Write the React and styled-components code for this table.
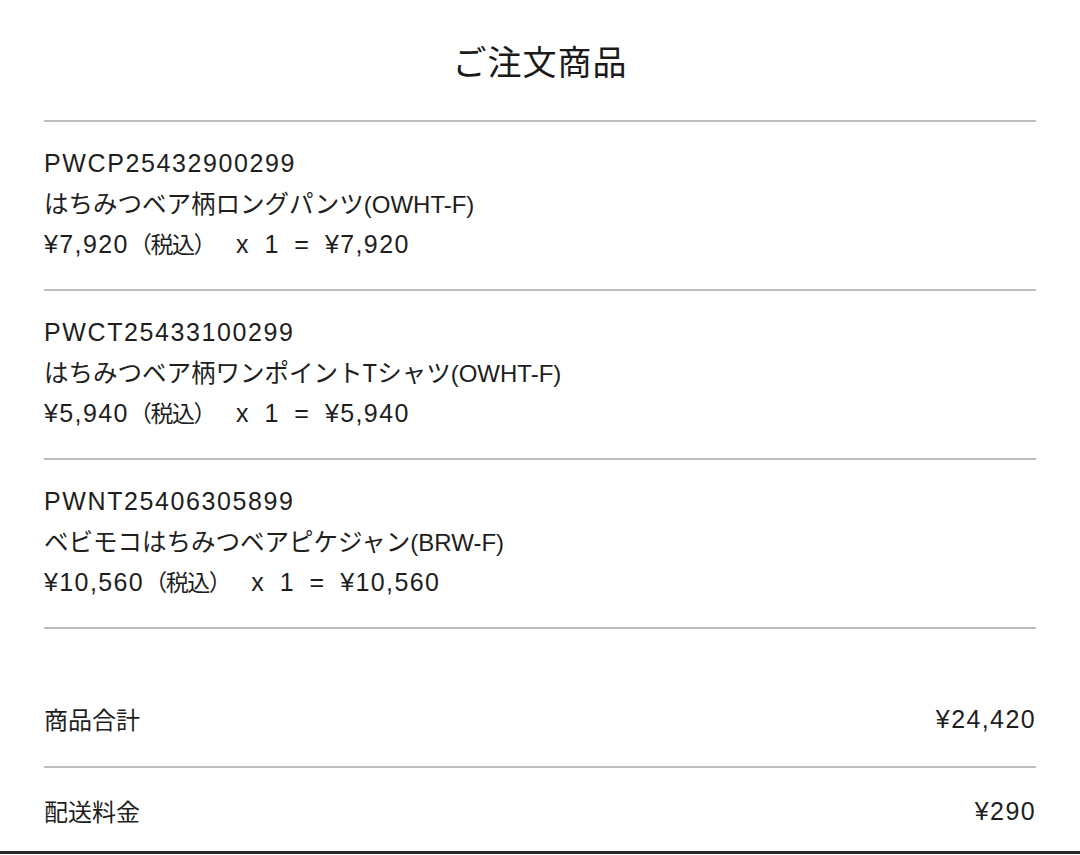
import styled, { createGlobalStyle } from "styled-components";

const GlobalStyle = createGlobalStyle`
  html, body {
    margin: 0;
    padding: 0;
    background: #fff;
  }
  body {
    font-family: "Liberation Sans", "Noto Sans CJK JP", sans-serif;
    color: #1e1e1e;
  }
`;

const items = [
  { code: "PWCP25432900299", name: "はちみつベア柄ロングパンツ", size: "(OWHT-F)", price: "¥7,920", qty: 1, total: "¥7,920" },
  { code: "PWCT25433100299", name: "はちみつベア柄ワンポイントTシャツ", size: "(OWHT-F)", price: "¥5,940", qty: 1, total: "¥5,940" },
  { code: "PWNT25406305899", name: "ベビモコはちみつベアピケジャン", size: "(BRW-F)", price: "¥10,560", qty: 1, total: "¥10,560" },
];

function App() {
  return (
    <>
      <GlobalStyle />
      <Page>
        <Title>ご注文商品</Title>
        <List>
          {items.map((item) => (
            <Item key={item.code}>
              <Code>{item.code}</Code>
              <Name>
                {item.name}
                <Latin>{item.size}</Latin>
              </Name>
              <PriceLine>
                <Num>{item.price}</Num>
                <Tax>（税込）</Tax>
                <Op>x</Op>
                <Op>{item.qty}</Op>
                <Op>=</Op>
                <Num>{item.total}</Num>
              </PriceLine>
            </Item>
          ))}
        </List>
        <Summary>
          <SumRow $first>
            <Label>商品合計</Label>
            <Num>¥24,420</Num>
          </SumRow>
          <SumRow>
            <Label>配送料金</Label>
            <Num>¥290</Num>
          </SumRow>
        </Summary>
      </Page>
      <BottomBar />
    </>
  );
}

const Page = styled.div`
  padding: 0 44px;
`;

const Title = styled.h1`
  margin: 0;
  height: 120px;
  display: flex;
  align-items: center;
  justify-content: center;
  font-family: "Noto Sans CJK JP", sans-serif;
  font-weight: 400;
  font-size: 34px;
  letter-spacing: 1px;
  color: #1a1a1a;
  border-bottom: 2px solid #bdbdbd;
`;

const List = styled.div`
  display: flex;
  flex-direction: column;
`;

const Item = styled.div`
  padding: 21px 0 26px;
  border-bottom: 2px solid #bdbdbd;
`;

const Code = styled.div`
  height: 40px;
  font-size: 25px;
  line-height: 40px;
  letter-spacing: 1.6px;
`;

const Name = styled.div`
  height: 40px;
  font-family: "Noto Sans CJK JP", sans-serif;
  font-size: 24.5px;
  line-height: 40px;
  white-space: nowrap;
`;

const Latin = styled.span`
  font-family: "Liberation Sans", sans-serif;
  font-size: 24px;
`;

const PriceLine = styled.div`
  height: 40px;
  display: flex;
  align-items: baseline;
  font-size: 25px;
  line-height: 40px;
`;

const Num = styled.span`
  letter-spacing: 1.4px;
`;

const Tax = styled.span`
  font-family: "Noto Sans CJK JP", sans-serif;
  font-size: 23px;
  letter-spacing: -1.5px;
  margin-right: 21px;
`;

const Op = styled.span`
  margin-right: 16px;
`;

const Summary = styled.div`
  display: flex;
  flex-direction: column;
`;

const SumRow = styled.div`
  height: 40px;
  display: flex;
  justify-content: space-between;
  align-items: center;
  font-size: 25px;
  line-height: 40px;
  padding: ${(p) => (p.$first ? "70px 0 27px" : "23px 0 20px")};
  border-bottom: ${(p) => (p.$first ? "2px solid #bdbdbd" : "none")};
`;

const Label = styled.span`
  font-family: "Noto Sans CJK JP", sans-serif;
  font-size: 24px;
`;

const BottomBar = styled.div`
  height: 3px;
  background: #2a2a2a;
`;

export default App;
